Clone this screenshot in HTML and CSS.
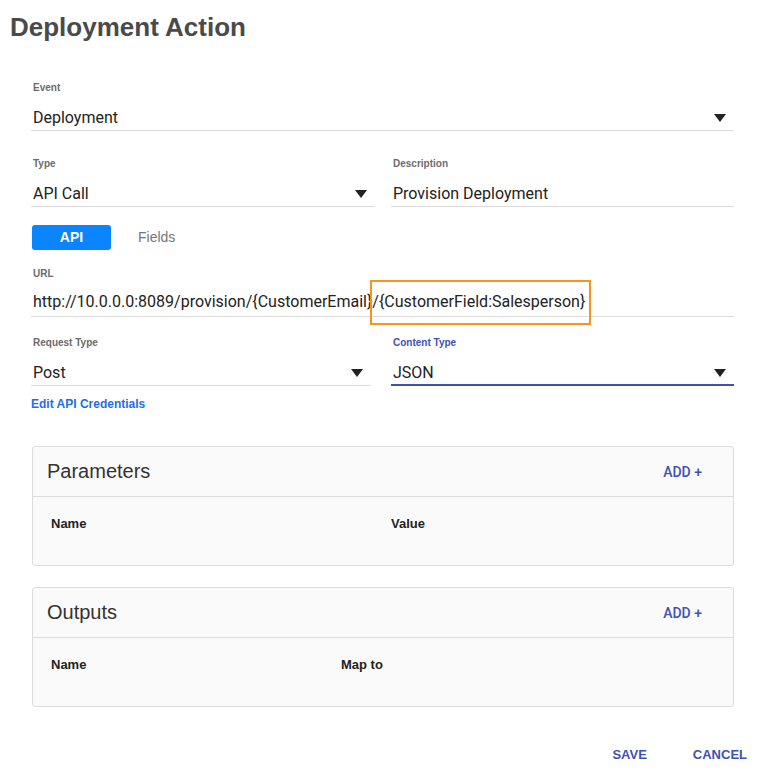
FILE: index.html
```html
<!DOCTYPE html>
<html>
<head>
<meta charset="utf-8">
<link rel="stylesheet" href="styles.css">
</head>
<body>
<div class="page">
  <h1 class="title">Deployment Action</h1>
  <div class="form">
    <div class="field field-event">
      <div class="label">Event</div>
      <div class="input"><span class="value">Deployment</span><span class="caret"></span></div>
    </div>

    <div class="row row-type">
      <div class="field">
        <div class="label">Type</div>
        <div class="input"><span class="value">API Call</span><span class="caret"></span></div>
      </div>
      <div class="field">
        <div class="label">Description</div>
        <div class="input"><span class="value">Provision Deployment</span></div>
      </div>
    </div>

    <div class="tabs">
      <div class="tab tab-active">API</div>
      <div class="tab">Fields</div>
    </div>

    <div class="field field-url">
      <div class="label">URL</div>
      <div class="input input-url"><span class="value">http://10.0.0.0:8089/provision/{CustomerEmail}<span class="highlight">/{CustomerField:Salesperson}</span></span></div>
    </div>

    <div class="row row-request">
      <div class="field">
        <div class="label">Request Type</div>
        <div class="input input-narrow"><span class="value">Post</span><span class="caret"></span></div>
      </div>
      <div class="field field-focused">
        <div class="label">Content Type</div>
        <div class="input"><span class="value">JSON</span><span class="caret"></span></div>
      </div>
    </div>

    <div class="link">Edit API Credentials</div>

    <div class="card card-params">
      <div class="card-head">
        <span class="card-title">Parameters</span>
        <span class="add">ADD +</span>
      </div>
      <div class="card-body cols-params">
        <span class="col-head">Name</span>
        <span class="col-head">Value</span>
      </div>
    </div>

    <div class="card card-outputs">
      <div class="card-head">
        <span class="card-title">Outputs</span>
        <span class="add">ADD +</span>
      </div>
      <div class="card-body cols-outputs">
        <span class="col-head">Name</span>
        <span class="col-head">Map to</span>
      </div>
    </div>
  </div>

  <div class="footer">
    <span class="action">SAVE</span>
    <span class="action">CANCEL</span>
  </div>
</div>
</body>
</html>
```

FILE: styles.css
```css
* { box-sizing: border-box; }

body {
  margin: 0;
  background: #ffffff;
  font-family: "Liberation Sans", Arial, sans-serif;
}

.page {
  width: 769px;
  height: 781px;
  position: relative;
}

.title {
  margin: 12px 0 0 10px;
  font-size: 26px;
  line-height: 30px;
  font-weight: 700;
  color: #4a4a4a;
}

.form {
  margin-left: 31px;
  width: 703px;
}

.field-event {
  margin-top: 39px;
}

.label {
  font-size: 10px;
  line-height: 14px;
  font-weight: 700;
  color: #6b6b6b;
  padding-left: 2px;
}

.field-focused .label {
  color: #3f51b5;
}

.input {
  height: 36px;
  display: flex;
  align-items: flex-end;
  justify-content: space-between;
  border-bottom: 1px solid #dcdcdc;
  padding: 0 8px 2px 2px;
}

.field-focused .input {
  border-bottom: 2px solid #3f51b5;
  padding-bottom: 1px;
}

.value {
  font-family: Roboto, "Liberation Sans", sans-serif;
  font-size: 16px;
  line-height: 20px;
  color: #222222;
  white-space: nowrap;
}

.caret {
  width: 0;
  height: 0;
  border-left: 6px solid transparent;
  border-right: 6px solid transparent;
  border-top: 8px solid #222222;
  margin-bottom: 6px;
}

.row {
  display: grid;
  grid-template-columns: 344px 343px;
  column-gap: 16px;
}

.row-type {
  margin-top: 26px;
}

.input-narrow {
  margin-right: 4px;
}

.tabs {
  margin-top: 18px;
  display: flex;
  align-items: center;
  gap: 27px;
  padding-left: 1px;
}

.tab {
  height: 25px;
  line-height: 25px;
  font-size: 14px;
  color: #777777;
}

.tab-active {
  width: 79px;
  text-align: center;
  background: #0a84ff;
  color: #ffffff;
  font-weight: 700;
  border-radius: 3px;
}

.field-url {
  margin-top: 17px;
}

.input-url {
  padding-bottom: 4px;
}

.highlight {
  position: relative;
}

.highlight::after {
  content: "";
  position: absolute;
  left: -2px;
  right: -6px;
  top: -12px;
  bottom: -14px;
  border: 2px solid #f7931e;
}

.row-request {
  margin-top: 19px;
}

.link {
  margin-top: 11px;
  font-size: 12px;
  line-height: 14px;
  font-weight: 700;
  color: #1e6fe6;
}

.card {
  border: 1px solid #dddddd;
  border-radius: 3px;
  background: #fafafa;
  margin-left: 1px;
  width: 702px;
}

.card-params {
  margin-top: 35px;
}

.card-outputs {
  margin-top: 21px;
}

.card-head {
  height: 50px;
  display: flex;
  align-items: center;
  justify-content: space-between;
  padding: 0 31px 0 14px;
  border-bottom: 1px solid #dddddd;
}

.card-title {
  font-size: 20px;
  color: #333333;
}

.add {
  font-family: Roboto, "Liberation Sans", sans-serif;
  font-size: 14px;
  font-weight: 500;
  color: #3f51b5;
}

.card-body {
  height: 68px;
  display: grid;
  padding: 19px 0 0 18px;
  align-items: start;
}

.cols-params {
  grid-template-columns: 340px 1fr;
}

.cols-outputs {
  grid-template-columns: 290px 1fr;
}

.col-head {
  font-size: 13px;
  line-height: 16px;
  font-weight: 700;
  color: #222222;
}

.footer {
  margin-top: 40px;
  display: flex;
  justify-content: flex-end;
  gap: 46px;
  padding-right: 22px;
}

.action {
  font-size: 13px;
  line-height: 16px;
  font-weight: 700;
  color: #3f51b5;
}
```
